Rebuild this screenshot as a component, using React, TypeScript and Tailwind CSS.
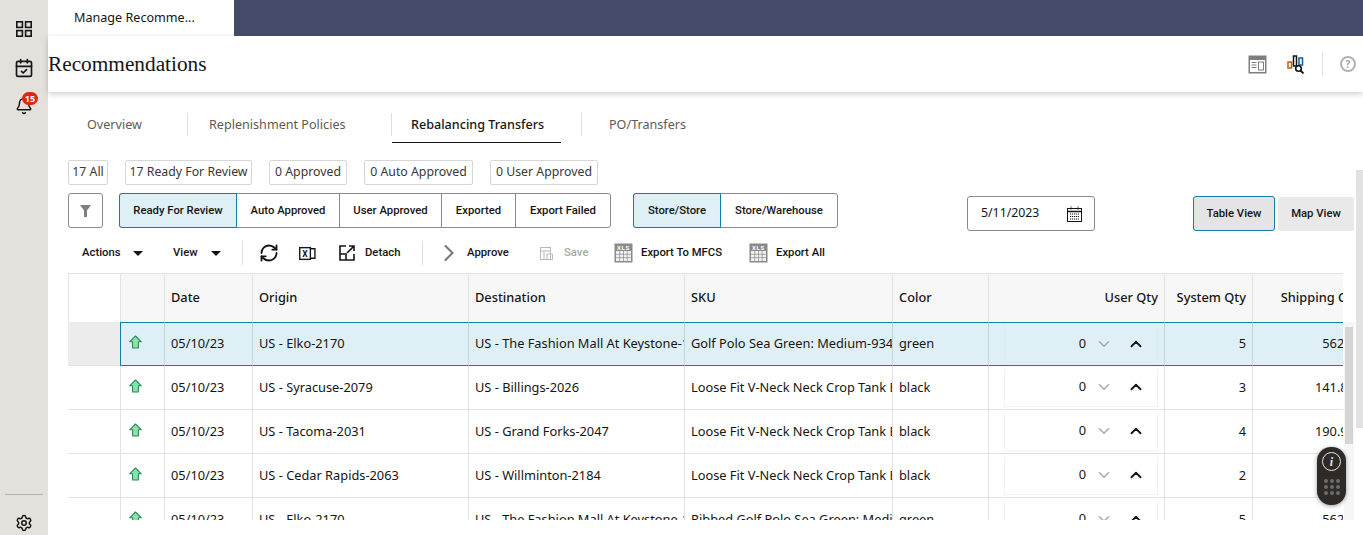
import * as React from 'react';
import { Bell, CalendarCheck, ChevronDown, ChevronRight, ChevronUp, RefreshCw, Settings } from 'lucide-react';

const font = { fontFamily: '"Noto Sans", "Open Sans", sans-serif' };
const buttonFont = { fontFamily: 'Roboto, "Noto Sans", sans-serif' };

const rows = [
  { origin: 'US - Elko-2170', dest: 'US - The Fashion Mall At Keystone-1024', sku: 'Golf Polo Sea Green: Medium-93401', color: 'green', sys: 5, ship: '562.5' },
  { origin: 'US - Syracuse-2079', dest: 'US - Billings-2026', sku: 'Loose Fit V-Neck Neck Crop Tank Black', color: 'black', sys: 3, ship: '141.87' },
  { origin: 'US - Tacoma-2031', dest: 'US - Grand Forks-2047', sku: 'Loose Fit V-Neck Neck Crop Tank Black', color: 'black', sys: 4, ship: '190.96' },
  { origin: 'US - Cedar Rapids-2063', dest: 'US - Willminton-2184', sku: 'Loose Fit V-Neck Neck Crop Tank Black', color: 'black', sys: 2, ship: '95.48' },
  { origin: 'US - Elko-2170', dest: 'US - The Fashion Mall At Keystone-1024', sku: 'Ribbed Golf Polo Sea Green: Medium-93', color: 'green', sys: 5, ship: '562.5' },
];

const GridIcon = () => (
  <svg width="16" height="16" viewBox="0 0 16 16" fill="none" stroke="#161513" strokeWidth="1.6">
    <rect x="0.8" y="0.8" width="5.6" height="5.6" />
    <rect x="9.6" y="0.8" width="5.6" height="5.6" />
    <rect x="0.8" y="9.6" width="5.6" height="5.6" />
    <rect x="9.6" y="9.6" width="5.6" height="5.6" />
  </svg>
);

const XlsIcon = () => (
  <svg width="19" height="20" viewBox="0 0 19 20">
    <rect x="0.5" y="0.5" width="18" height="19" fill="#8a8a8a" />
    <text x="9.5" y="6.5" textAnchor="middle" fontSize="6" fill="#fff" fontWeight="700" letterSpacing="0.8">XLS</text>
    <rect x="2" y="8" width="15" height="10" fill="#f1f1f1" />
    <path d="M2 11.3h15M2 14.6h15M5.7 8v10M9.5 8v10M13.2 8v10" stroke="#8a8a8a" strokeWidth="0.7" />
  </svg>
);

const ArrowIcon = () => (
  <svg width="13" height="14" viewBox="0 0 13 14">
    <path d="M6.5 1 L12.3 6.8 H9.4 V13 H3.6 V6.8 H0.7 Z" fill="#8fe0ad" stroke="#2d8a5e" strokeWidth="1.1" strokeLinejoin="round" />
  </svg>
);

const Caret = ({ className }: { className: string }) => (
  <span className={`w-0 h-0 border-x-[5px] border-x-transparent border-t-[5px] border-t-[#161513] ${className}`} />
);

const columns = 'grid grid-cols-[52px_44px_88px_216px_216px_208px_96px_176px_88px_119px] w-[1303px]';

const Row = ({ row, selected }: { row: (typeof rows)[number]; selected: boolean }) => {
  const cell = selected
    ? 'flex items-center h-full px-[6px] overflow-hidden whitespace-nowrap bg-[#dfeff6] border-l border-l-[#c3d5dd] border-y border-y-[#0f7fa8]'
    : 'flex items-center h-full px-[6px] overflow-hidden whitespace-nowrap border-l border-[#e2e2e2]';
  return (
    <div className={`${columns} h-[44px] text-[12.8px] text-[#161513] ${selected ? '' : 'border-b border-[#e2e2e2]'}`}>
      <div className={selected ? 'bg-[#ececec] border-b border-[#e2e2e2]' : ''} />
      <div className={selected
        ? 'flex justify-start pl-[8px] pt-[12px] h-full bg-[#dfeff6] border-l border-l-[#0f7fa8] border-y border-y-[#0f7fa8]'
        : 'flex justify-start pl-[8px] pt-[13px] h-full border-l border-[#e2e2e2]'}>
        <ArrowIcon />
      </div>
      {['05/10/23', row.origin, row.dest, row.sku, row.color].map((text, i) => (
        <div key={i} className={cell}>{text}</div>
      ))}
      <div className={`${cell} justify-end`}>
        <div className={`flex items-center justify-end shrink-0 w-[154px] h-[38px] pr-[12px] border-x border-b ${selected ? 'border-[#d9ebf3]' : 'border-[#f2f2f2]'}`}>
          <span>0</span>
          <ChevronDown size={18} strokeWidth={2} className="ml-[9px] text-[#a8a8a8]" />
          <ChevronUp size={18} strokeWidth={2.4} className="ml-[14px] text-[#161513]" />
        </div>
      </div>
      <div className={`${cell} justify-end`}>{row.sys}</div>
      <div className={`${cell} justify-end pr-[16px]`}>{row.ship}</div>
    </div>
  );
};

const App = () => {
  return (
    <div className="flex h-[535px] w-[1363px] overflow-hidden bg-white relative" style={font}>
      {/* side rail */}
      <div className="w-[48px] shrink-0 bg-[#e4e1dd] flex flex-col items-center text-[#161513]">
        <div className="mt-[21px]"><GridIcon /></div>
        <CalendarCheck size={20} strokeWidth={2} className="mt-[21px]" />
        <div className="relative mt-[19px]">
          <Bell size={18} strokeWidth={2} />
          <span className="absolute -top-[5px] left-[7px] w-[16px] h-[13px] rounded-full bg-[#e0280f] text-white text-[9px] font-bold flex items-center justify-center">15</span>
        </div>
        <div className="mt-auto w-[38px] border-t border-[#b9b5b0] mb-[19px]" />
        <Settings size={18} strokeWidth={2} className="mb-[3px]" />
      </div>

      <div className="flex-1 min-w-0 flex flex-col">
        {/* top tab strip */}
        <div className="h-[36px] bg-[#444c6a] shrink-0 flex">
          <div className="w-[186px] bg-white pl-[26px] flex items-center text-[12.6px] text-[#161513]">Manage Recomme...</div>
        </div>

        {/* page header */}
        <div className="h-[56px] shrink-0 flex items-center shadow-[0_2px_6px_rgba(0,0,0,0.2)] relative z-10 bg-white">
          <div className="text-[21.3px] text-[#161513] pt-[2px]" style={{ fontFamily: '"Liberation Serif", serif' }}>Recommendations</div>
          <div className="ml-auto flex items-center">
            <svg width="19" height="19" viewBox="0 0 19 19">
              <rect x="0.5" y="0.5" width="18" height="18" fill="#7f7f7f" />
              <rect x="2" y="5" width="15" height="12" fill="#fff" />
              <path d="M3.5 7.5h5M3.5 10h5M3.5 12.5h5" stroke="#7f7f7f" strokeWidth="1" />
              <rect x="10.5" y="7" width="5" height="8" fill="none" stroke="#7f7f7f" strokeWidth="1" />
            </svg>
            <svg width="18" height="19" viewBox="0 0 18 19" fill="none" className="ml-[20px]">
              <rect x="1" y="7" width="3.5" height="6" stroke="#c75a1a" strokeWidth="1.5" />
              <rect x="6.5" y="1" width="3" height="10" stroke="#161513" strokeWidth="1.5" />
              <rect x="12" y="3" width="3.5" height="7" stroke="#0f5f9a" strokeWidth="1.5" />
              <circle cx="11.5" cy="13.5" r="2.8" stroke="#161513" strokeWidth="1.6" />
              <path d="M13.5 15.5l3 3" stroke="#161513" strokeWidth="1.8" />
            </svg>
            <div className="ml-[17px] h-[24px] border-l border-[#e4e1dd]" />
            <div className="ml-[17px] mr-[7px] w-[16px] h-[16px] rounded-full border-2 border-[#b5b2ae] text-[#a8a5a1] text-[10px] font-bold flex items-center justify-center">?</div>
          </div>
        </div>

        {/* content */}
        <div className="flex-1 min-h-0 relative">
          <div className="h-[51px] flex items-start pt-[21px] text-[12.6px] leading-[23px] text-[#5f5a54]">
            <div className="w-[140px] pl-[39px] h-[23px] border-r border-[#dedede]">Overview</div>
            <div className="w-[204px] pl-[21px] h-[23px] border-r border-[#dedede]">Replenishment Policies</div>
            <div className="w-[169px] pl-[19px] h-[30px] border-b border-[#161513] font-medium text-[#161513] whitespace-nowrap">Rebalancing Transfers</div>
            <div className="ml-[20px] pl-[27px] border-l border-[#dedede] h-[23px] whitespace-nowrap">PO/Transfers</div>
          </div>

          <div className="ml-[20px] mt-[17px] flex gap-[17px] h-[25px] text-[12.3px] text-[#3a3733] whitespace-nowrap">
            <div className="w-[40px] border border-[#d6d6d6] rounded-[2px] flex items-center justify-center">17 All</div>
            <div className="w-[127px] border border-[#d6d6d6] rounded-[2px] flex items-center justify-center">17 Ready For Review</div>
            <div className="w-[78px] border border-[#d6d6d6] rounded-[2px] flex items-center justify-center">0 Approved</div>
            <div className="w-[109px] border border-[#d6d6d6] rounded-[2px] flex items-center justify-center">0 Auto Approved</div>
            <div className="w-[108px] border border-[#d6d6d6] rounded-[2px] flex items-center justify-center">0 User Approved</div>
          </div>

          <div className="ml-[20px] mt-[8px] flex items-start h-[38px] text-[11.3px] font-medium text-[#161513] whitespace-nowrap" style={buttonFont}>
            <div className="w-[35px] h-[35px] border border-[#8a8a8a] rounded-[3px] flex items-center justify-center">
              <svg width="11" height="12" viewBox="0 0 11 12"><path d="M0 0h11L7 5.5V12H4V5.5Z" fill="#7f7f7f" /></svg>
            </div>
            <div className="ml-[16px] flex h-[35px] border border-[#8a8a8a] rounded-[3px]">
              <div className="w-[118px] -m-[1px] mr-0 pt-[2px] bg-[#dfeff6] border border-[#0f7fa8] rounded-l-[3px] flex items-center justify-center">Ready For Review</div>
              <div className="w-[103px] pt-[2px] border-r border-[#8a8a8a] flex items-center justify-center">Auto Approved</div>
              <div className="w-[102px] pt-[2px] border-r border-[#8a8a8a] flex items-center justify-center">User Approved</div>
              <div className="w-[74px] pt-[2px] border-r border-[#8a8a8a] flex items-center justify-center">Exported</div>
              <div className="w-[94px] pt-[2px] flex items-center justify-center">Export Failed</div>
            </div>
            <div className="ml-[22px] flex h-[35px] border border-[#8a8a8a] rounded-[3px]">
              <div className="w-[88px] -m-[1px] mr-0 pt-[2px] bg-[#dfeff6] border border-[#0f7fa8] rounded-l-[3px] flex items-center justify-center">Store/Store</div>
              <div className="w-[116px] pt-[2px] flex items-center justify-center">Store/Warehouse</div>
            </div>
            <div className="ml-[129px] mt-[3px] w-[128px] h-[35px] border border-[#8a8a8a] rounded-[3px] flex items-center pl-[13px] text-[12.3px] font-normal" style={font}>
              5/11/2023
              <svg width="15" height="16" viewBox="0 0 15 16" className="ml-auto mr-[12px]" fill="none" stroke="#161513">
                <rect x="0.5" y="2.5" width="14" height="13" />
                <path d="M0.5 5.5h14" strokeWidth="1.5" />
                <path d="M4 0.5v3M11 0.5v3M3 8h9M3 10.5h9M3 13h9" strokeDasharray="1.2 0.8" />
              </svg>
            </div>
            <div className="ml-[98px] mt-[3px] w-[82px] h-[35px] pt-[1px] bg-[#e4e4e4] border border-[#0f7fa8] rounded-[3px] flex items-center justify-center">Table View</div>
            <div className="ml-[3px] mt-[4px] w-[76px] h-[34px] pt-[1px] bg-[#e9e9e9] rounded-[3px] flex items-center justify-center">Map View</div>
          </div>

          <div className="ml-[34px] mt-[7px] pt-[2px] flex items-center h-[28px] text-[11.3px] font-medium text-[#161513] whitespace-nowrap" style={buttonFont}>
            <span className="w-[39px]">Actions</span>
            <Caret className="ml-[12px]" />
            <span className="ml-[30px] w-[25px]">View</span>
            <Caret className="ml-[13px]" />
            <div className="ml-[21px] h-[24px] border-l border-[#dedede]" />
            <RefreshCw size={20} strokeWidth={2.2} className="ml-[16px]" />
            <svg width="17" height="17" viewBox="0 0 16 16" fill="none" className="ml-[20px]" stroke="#161513" strokeWidth="1.3">
              <rect x="0.7" y="2.5" width="10" height="11" />
              <path d="M11 3.5h4v9h-4" />
              <text x="5.7" y="11" textAnchor="middle" fontSize="8" fill="#161513" stroke="none" fontWeight="700">X</text>
            </svg>
            <svg width="18" height="18" viewBox="0 0 18 18" fill="none" className="ml-[22px]" stroke="#161513" strokeWidth="1.6">
              <path d="M8 2H2v14h14v-6" />
              <path d="M2 10h6v6" />
              <path d="M9 9l7-7M11 2h5v5" />
            </svg>
            <span className="ml-[9px] w-[36px]">Detach</span>
            <div className="ml-[21px] h-[24px] border-l border-[#dedede]" />
            <ChevronRight size={28} strokeWidth={1.8} className="ml-[12px] text-[#777]" />
            <span className="ml-[4px] w-[44px]">Approve</span>
            <svg width="13" height="13" viewBox="0 0 13 13" fill="none" stroke="#b8b8b8" className="ml-[29px]">
              <rect x="0.5" y="0.5" width="10" height="12" />
              <path d="M0.5 4h10M4 4v8.5M7 7h5.5v5.5H7z" />
            </svg>
            <span className="ml-[11px] w-[24px] text-[#a8a8a8]">Save</span>
            <span className="ml-[26px] flex"><XlsIcon /></span>
            <span className="ml-[8px] w-[82px]">Export To MFCS</span>
            <span className="ml-[26px] flex"><XlsIcon /></span>
            <span className="ml-[8px]">Export All</span>
          </div>

          {/* grid */}
          <div className="ml-[20px] mt-[7px] w-[1275px] h-[247px] overflow-hidden border-t border-[#e2e2e2]">
            <div className={`${columns} h-[48px] text-[12.8px] font-medium text-[#161513]`}>
              <div className="border-l border-[#e2e2e2]" />
              <div className="bg-[#f7f7f7] border-l border-[#e2e2e2]" />
              {['Date', 'Origin', 'Destination', 'SKU', 'Color'].map((h) => (
                <div key={h} className="bg-[#f7f7f7] border-l border-[#e2e2e2] px-[6px] flex items-center">{h}</div>
              ))}
              {['User Qty', 'System Qty', 'Shipping Cost'].map((h) => (
                <div key={h} className="bg-[#f7f7f7] border-l border-[#e2e2e2] px-[6px] flex items-center justify-end whitespace-nowrap">{h}</div>
              ))}
            </div>
            {rows.map((row, i) => <Row key={i} row={row} selected={i === 0} />)}
          </div>

          {/* scrollbars */}
          <div className="absolute left-[1296px] top-[230px] w-[10px] h-[198px] bg-[#f6f6f6]" />
          <div className="absolute left-[1297px] top-[235px] w-[8px] h-[117px] bg-[#d4d4d4]" />
          <div className="absolute left-[1308px] top-[78px] w-[7px] h-[258px] bg-[#e2e2e2]" />

          {/* floating widget */}
          <div className="absolute left-[1269px] top-[355px] w-[29px] h-[58px] rounded-[14px] bg-[#2e2a28] shadow-[0_1px_4px_rgba(0,0,0,0.4)] flex flex-col items-center pt-[5px]">
            <div className="w-[19px] h-[19px] rounded-full border border-[#e8e6e3] text-[#e8e6e3] text-[12px] italic font-bold flex items-center justify-center" style={{ fontFamily: '"Liberation Serif", serif' }}>i</div>
            <div className="mt-[8px] grid grid-cols-3 gap-[2px]">
              {[0, 1, 2, 3, 4, 5, 6, 7, 8].map((d) => <span key={d} className="w-[4px] h-[4px] rounded-full bg-[#6f6b68]" />)}
            </div>
          </div>
        </div>
      </div>
    </div>
  );
};

export default App;
